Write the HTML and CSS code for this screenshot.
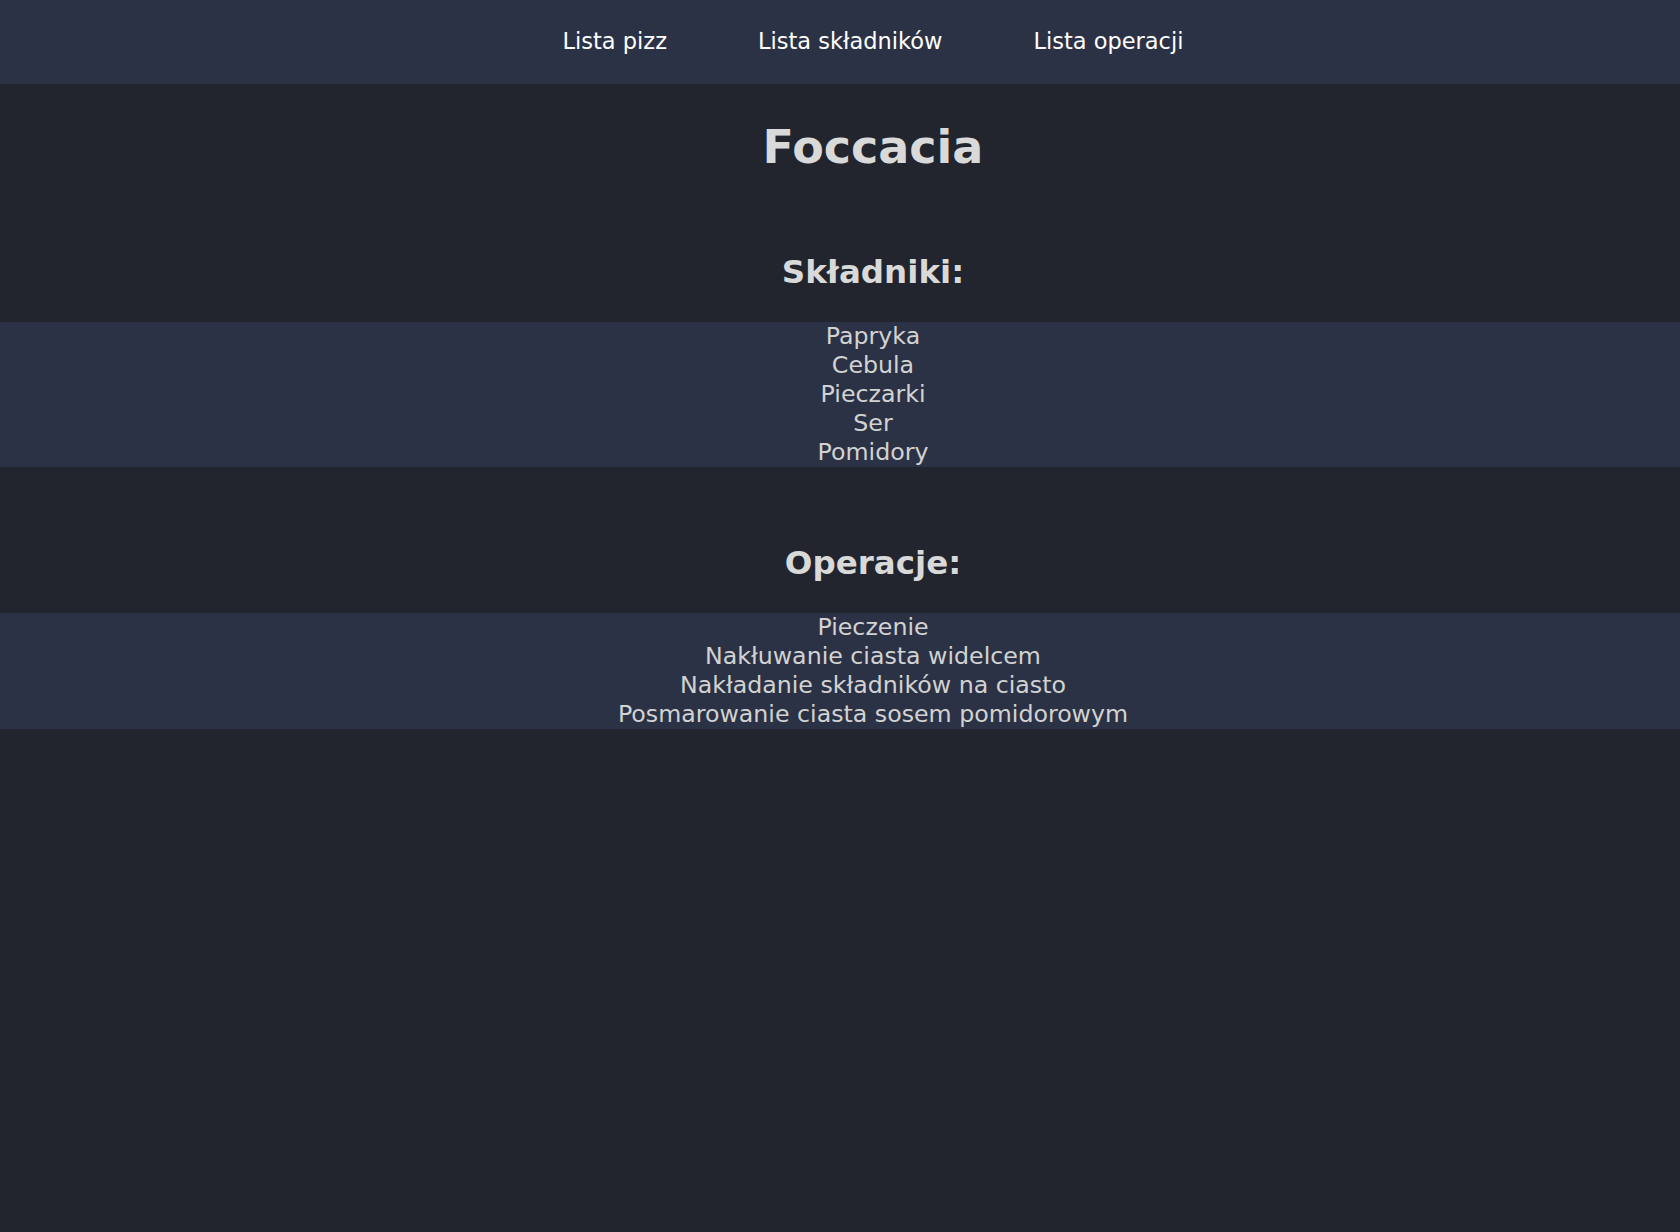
FILE: index.html
```html
<!DOCTYPE html>
<html lang="pl">
<head>
<meta charset="utf-8">
<title>Foccacia</title>
<link rel="stylesheet" href="styles.css">
</head>
<body>
<nav class="topnav">
  <div class="topnav-inner">
    <a class="navlink" href="#">Lista pizz</a>
    <a class="navlink" href="#">Lista składników</a>
    <a class="navlink" href="#">Lista operacji</a>
  </div>
</nav>
<main class="page">
  <h1 class="title">Foccacia</h1>
  <section class="block">
    <h2 class="subtitle">Składniki:</h2>
    <ul class="band">
      <li>Papryka</li>
      <li>Cebula</li>
      <li>Pieczarki</li>
      <li>Ser</li>
      <li>Pomidory</li>
    </ul>
  </section>
  <section class="block">
    <h2 class="subtitle">Operacje:</h2>
    <ul class="band">
      <li>Pieczenie</li>
      <li>Nakłuwanie ciasta widelcem</li>
      <li>Nakładanie składników na ciasto</li>
      <li>Posmarowanie ciasta sosem pomidorowym</li>
    </ul>
  </section>
</main>
</body>
</html>
```
FILE: styles.css
```css
html, body {
  margin: 0;
  padding: 0;
  background: #22252e;
  min-height: 100%;
}
body {
  font-family: "DejaVu Sans", "Liberation Sans", sans-serif;
  color: #d6d6d6;
}
.topnav {
  background: #2c3245;
  height: 84px;
  display: flex;
  align-items: center;
  justify-content: center;
  padding-left: 66px;
}
.topnav-inner {
  display: flex;
  gap: 91px;
}
.navlink {
  color: #ffffff;
  text-decoration: none;
  font-size: 22.5px;
  line-height: 29px;
  position: relative;
  top: -1px;
}
.page {
  display: flex;
  flex-direction: column;
}
.title {
  margin: 34px 0 0;
  font-size: 46px;
  line-height: 58px;
  font-weight: bold;
  text-align: center;
  color: #d9d9d9;
  padding-left: 66px;
}
.block {
  margin-top: 74px;
  display: flex;
  flex-direction: column;
}
.subtitle {
  margin: 0 0 28px;
  font-size: 32.5px;
  line-height: 44px;
  font-weight: bold;
  text-align: center;
  color: #d9d9d9;
  padding-left: 66px;
}
.band {
  list-style: none;
  margin: 0;
  padding: 0 0 0 66px;
  background: #2c3245;
  text-align: center;
  font-size: 23.7px;
  line-height: 29px;
  color: #d2d2d2;
}
.band li {
  margin: 0;
}
```
